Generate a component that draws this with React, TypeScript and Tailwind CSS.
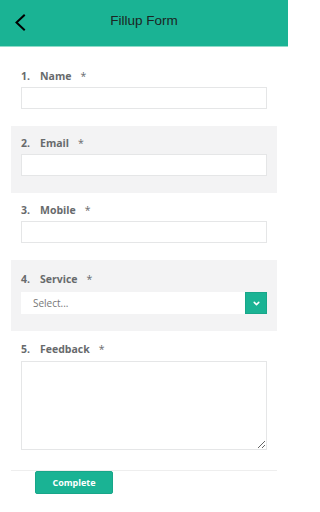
import { ChevronDown } from 'lucide-react';

type Field = {
    no: number;
    label: string;
    kind: 'text' | 'select' | 'textarea';
    shaded?: boolean;
};

const fields: Field[] = [
    { no: 1, label: 'Name', kind: 'text' },
    { no: 2, label: 'Email', kind: 'text', shaded: true },
    { no: 3, label: 'Mobile', kind: 'text' },
    { no: 4, label: 'Service', kind: 'select', shaded: true },
    { no: 5, label: 'Feedback', kind: 'textarea' },
];

// spacing per field type, taken from the screenshot
const spacing = {
    text: 'pt-[11px] pb-[17px]',
    select: 'pt-[13px] pb-[17px]',
    textarea: 'pt-[12px] pb-[20px]',
};

function FieldRow({ field }: { field: Field }) {
    return (
        <div className={`px-[10px] ${spacing[field.kind]} ${field.shaded ? 'bg-[#f3f3f4]' : 'bg-white'}`}>
            <label className={`flex items-center h-[14px] text-[10.5px] font-bold text-[#676a6c] ${field.kind === 'select' ? 'mb-[5px]' : field.kind === 'textarea' ? 'mb-[4px]' : 'mb-[3px]'}`}>
                <span className="w-[19px]">{field.no}.</span>
                <span>{field.label}</span>
                <span className="ml-[9px] font-normal">*</span>
            </label>

            {field.kind === 'text' && (
                <input
                    type="text"
                    className="block w-full h-[22px] bg-white border border-[#e5e6e7] outline-none px-2 text-[11px]"
                />
            )}

            {field.kind === 'select' && (
                <div className="flex h-[22px] bg-white">
                    <div className="flex-1 flex items-center pl-[12px] text-[10px] text-[#777]">Select...</div>
                    <div className="w-[22px] h-[22px] bg-[#1ab394] border border-[#18a689] flex items-center justify-center">
                        <ChevronDown className="w-[9px] h-[9px] text-white" strokeWidth={4} />
                    </div>
                </div>
            )}

            {field.kind === 'textarea' && (
                <textarea className="block w-full h-[89px] bg-white border border-[#e5e6e7] outline-none px-2 text-[11px]" />
            )}
        </div>
    );
}

export default function App() {
    return (
        <div className="w-[288px] h-[512px] bg-white overflow-hidden font-['Open_Sans',sans-serif]">
            {/* Header */}
            <div className="h-[47px] bg-[#1ab394] border-b border-[#8fdcc9] flex items-center relative">
                <svg className="absolute left-[14px] top-[14px]" width="12" height="18" viewBox="0 0 12 18" fill="none">
                    <polyline points="10,1.5 2.5,8.5 10,15.5" stroke="#000" strokeWidth="2" strokeLinecap="square" />
                </svg>
                <h1 className="w-full text-center text-[13.5px] text-[#1c2523] font-['Liberation_Sans',sans-serif] -mt-[4px]">
                    Fillup Form
                </h1>
            </div>

            <div className="mx-[11px] mt-[12px]">
                {fields.map(f => (
                    <FieldRow key={f.no} field={f} />
                ))}

                <div className="flex border-t border-[#eeeeee] pl-[24px]">
                    <button className="w-[78px] h-[23px] bg-[#1ab394] border border-[#18a689] rounded-[2px] text-white text-[9px] font-bold">
                        Complete
                    </button>
                </div>
            </div>
        </div>
    );
}
